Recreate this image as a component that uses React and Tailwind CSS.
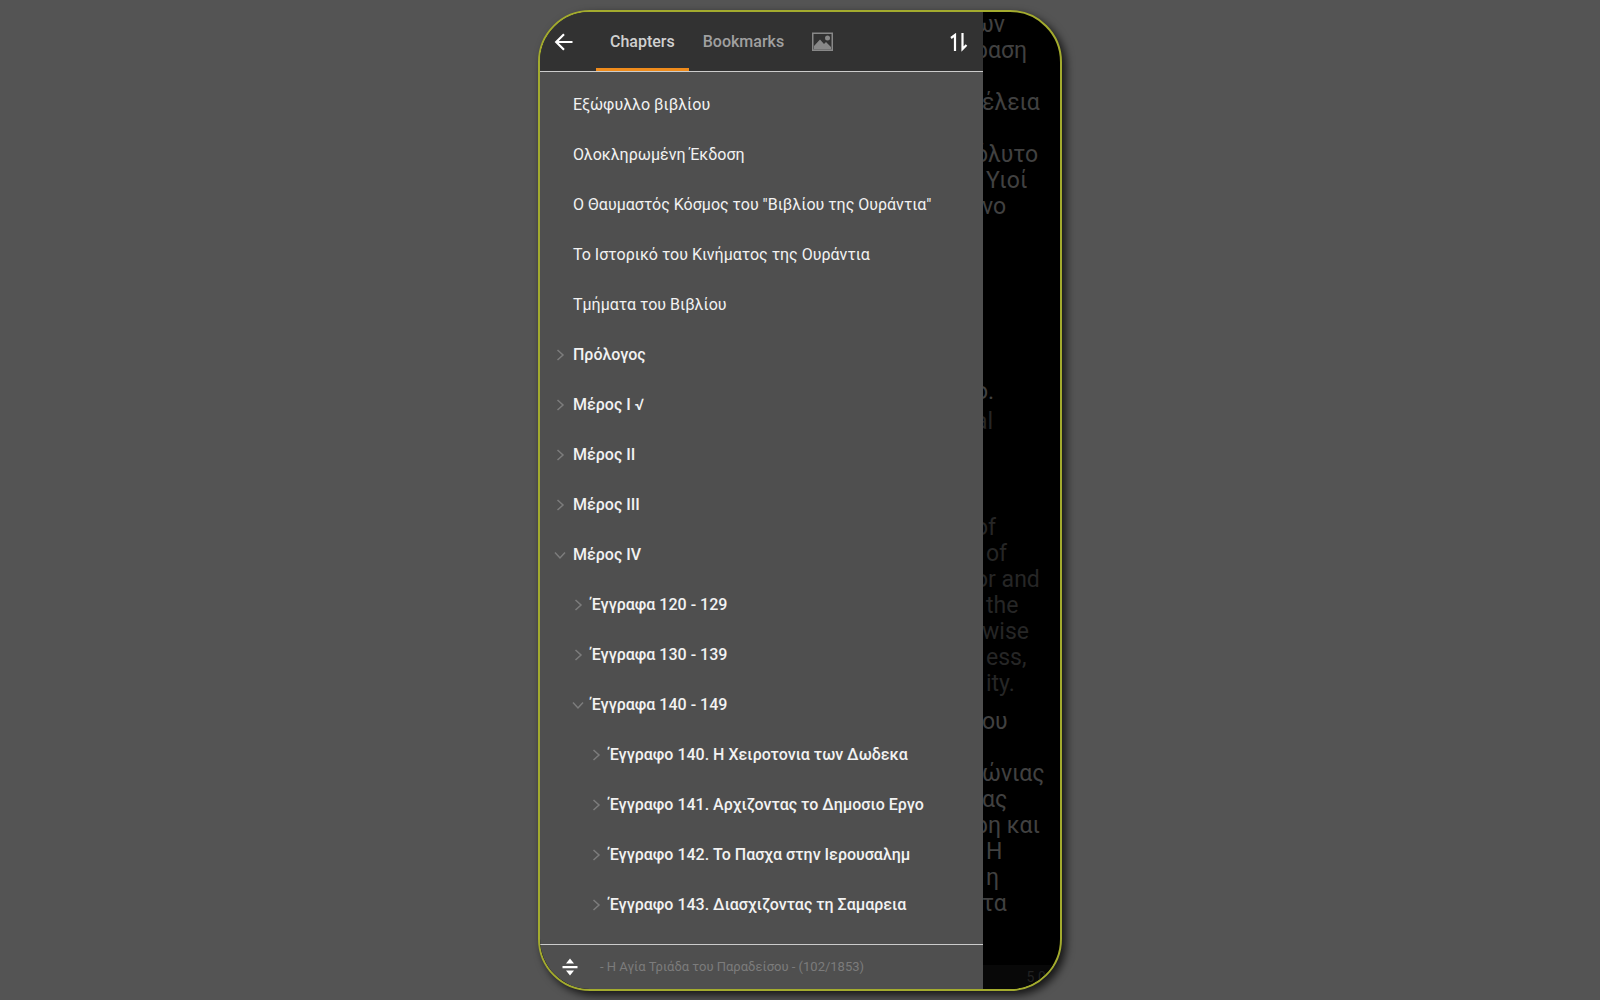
import React, { useState } from "react";
import clsx from "clsx";

const chapters = [
  { title: "Εξώφυλλο βιβλίου", level: 0 },
  { title: "Ολοκληρωμένη Έκδοση", level: 0 },
  { title: 'Ο Θαυμαστός Κόσμος του "Βιβλίου της Ουράντια"', level: 0 },
  { title: "Το Ιστορικό του Κινήματος της Ουράντια", level: 0 },
  { title: "Τμήματα του Βιβλίου", level: 0 },
  { title: "Πρόλογος", level: 0, group: true },
  { title: "Μέρος I √", level: 0, group: true },
  { title: "Μέρος II", level: 0, group: true },
  { title: "Μέρος III", level: 0, group: true },
  { title: "Μέρος IV", level: 0, group: true, open: true },
  { title: "Έγγραφα 120 - 129", level: 1, group: true },
  { title: "Έγγραφα 130 - 139", level: 1, group: true },
  { title: "Έγγραφα 140 - 149", level: 1, group: true, open: true },
  { title: "Έγγραφο 140. Η Χειροτονια των Δωδεκα", level: 2, group: true },
  { title: "Έγγραφο 141. Αρχιζοντας το Δημοσιο Εργο", level: 2, group: true },
  { title: "Έγγραφο 142. Το Πασχα στην Ιερουσαλημ", level: 2, group: true },
  { title: "Έγγραφο 143. Διασχιζοντας τη Σαμαρεια", level: 2, group: true },
];

const indents = ["pl-[14px]", "pl-8", "pl-[50px]"];

// Line ends of the book page that stick out beside the drawer
const paragraphs = [
  {
    className: "text-[#414141]",
    lines: [
      { text: "ων", cut: true },
      { text: "ραση", cut: true },
      { text: "" },
      { text: "έλεια" },
      { text: "" },
      { text: "όλυτο", cut: true },
      { text: "Υιοί", inset: true },
      { text: "νο" },
    ],
  },
  { className: "mt-[159px] text-[#414141]", lines: [{ text: "ο.", cut: true }] },
  { className: "mt-1 text-[#262626]", lines: [{ text: "al", cut: true }] },
  {
    className: "mt-20 text-[#262626]",
    lines: [
      { text: "of", cut: true },
      { text: "of", inset: true },
      { text: "or and", cut: true },
      { text: "the", inset: true },
      { text: "wise" },
      { text: "ess,", inset: true },
      { text: "ity.", inset: true },
    ],
  },
  {
    className: "mt-3 text-[#414141]",
    lines: [
      { text: "ου" },
      { text: "" },
      { text: "ώνιας" },
      { text: "ας" },
      { text: "ρη και", cut: true },
      { text: "Η", inset: true },
      { text: "η", inset: true },
      { text: "τα" },
    ],
  },
];

const BackIcon = () => (
  <svg className="w-5 h-5" viewBox="0 0 20 20" fill="none" stroke="currentColor" strokeWidth="2.2">
    <path d="M18.5 10H3M10 2.2 2.2 10l7.8 7.8" />
  </svg>
);

const PictureIcon = () => (
  <svg className="w-[21px] h-5" viewBox="0 0 21 20" fill="none">
    <rect x="0.75" y="1.25" width="19.5" height="17" stroke="currentColor" strokeWidth="1.5" />
    <circle cx="15.5" cy="6" r="2.5" fill="currentColor" />
    <path d="M2 17.5V14l6-6.5 4 4.5 2-2 5 5v2.5z" fill="currentColor" />
  </svg>
);

const SortIcon = () => (
  <svg className="w-[18px] h-5" viewBox="0 0 18 20" fill="none" stroke="currentColor" strokeWidth="2.2">
    <path d="M5 19V3L1 6M12.5 1v16l4-4" />
  </svg>
);

const CollapseIcon = () => (
  <svg className="w-4 h-[18px]" viewBox="0 0 16 18" fill="currentColor">
    <path d="M8 0.5 12 5.5H4zM0.5 8h15v2.2H0.5zM4 12.5h8L8 17.5z" />
  </svg>
);

const Chevron = ({ open }) => (
  <svg
    className={clsx("w-3 h-3", open && "rotate-90")}
    viewBox="0 0 12 12"
    fill="none"
    stroke="currentColor"
    strokeWidth="1.5"
  >
    <path d="M3.5 1 9 6l-5.5 5" />
  </svg>
);

const ChapterRow = ({ chapter }) => (
  <li>
    <button
      className={clsx(
        "w-full h-[50px] flex items-center gap-[7px] text-left whitespace-nowrap",
        indents[chapter.level],
        chapter.group && "font-medium"
      )}
    >
      <span className="w-3 shrink-0 text-[#7c7c7c]">
        {chapter.group && <Chevron open={chapter.open} />}
      </span>
      {chapter.title}
    </button>
  </li>
);

const BookPage = () => (
  <section className="flex-1 min-w-0 overflow-hidden relative text-[23px] leading-[26px] whitespace-nowrap">
    {paragraphs.map((paragraph, i) => (
      <div key={i} className={paragraph.className}>
        {paragraph.lines.map((line, j) => (
          <p
            key={j}
            className={clsx("h-[26px]", line.cut ? "-ml-2" : line.inset ? "ml-[3px]" : "-ml-px")}
          >
            {line.text}
          </p>
        ))}
      </div>
    ))}
    <div className="absolute inset-x-0 bottom-0 h-6 pr-[14px] bg-[#080808] text-[#222222] text-sm leading-6 text-right">
      5.0
    </div>
  </section>
);

const App = () => {
  const [tab, setTab] = useState("Chapters");

  return (
    <div
      className="min-h-screen pt-[10px] bg-[#545454] text-[#f2f2f2]"
      style={{ fontFamily: 'Roboto, "Noto Sans", sans-serif' }}
    >
      <main className="w-[524px] max-w-full mx-auto flex overflow-hidden rounded-[52px] border-2 border-[#a3ab2e] bg-black shadow-[4px_4px_8px_rgba(0,0,0,0.75)]">
        {/* Drawer */}
        <div className="w-[443px] shrink-0 bg-[#4f4f4f] text-base">
          <header className="h-[60px] pl-[14px] pr-[15px] flex items-center bg-[#323232] border-b border-[#cccccc]">
            <button aria-label="Back" className="mr-[22px] text-white">
              <BackIcon />
            </button>
            <nav className="flex self-stretch font-medium">
              {["Chapters", "Bookmarks"].map((name) => (
                <button
                  key={name}
                  onClick={() => setTab(name)}
                  className={clsx(
                    "px-[14px] pt-[3px] border-b-3",
                    tab === name
                      ? "border-[#f08c1c] text-[#d0d0d0]"
                      : "border-transparent text-[#a0a0a0]"
                  )}
                >
                  {name}
                </button>
              ))}
              <button aria-label="Pictures" className="px-[14px] text-[#888888]">
                <PictureIcon />
              </button>
            </nav>
            <button aria-label="Sort" className="ml-auto text-white">
              <SortIcon />
            </button>
          </header>

          <ul className="pt-2 pb-[14px]">
            {chapters.map((chapter) => (
              <ChapterRow key={chapter.title} chapter={chapter} />
            ))}
          </ul>

          <footer className="h-[45px] pl-[22px] flex items-center gap-[22px] border-t border-[#cccccc]">
            <button aria-label="Collapse all" className="text-white">
              <CollapseIcon />
            </button>
            <span className="text-[13px] text-[#7c7c7c]">
              - Η Αγία Τριάδα του Παραδείσου - (102/1853)
            </span>
          </footer>
        </div>

        <BookPage />
      </main>
    </div>
  );
};

export default App;
